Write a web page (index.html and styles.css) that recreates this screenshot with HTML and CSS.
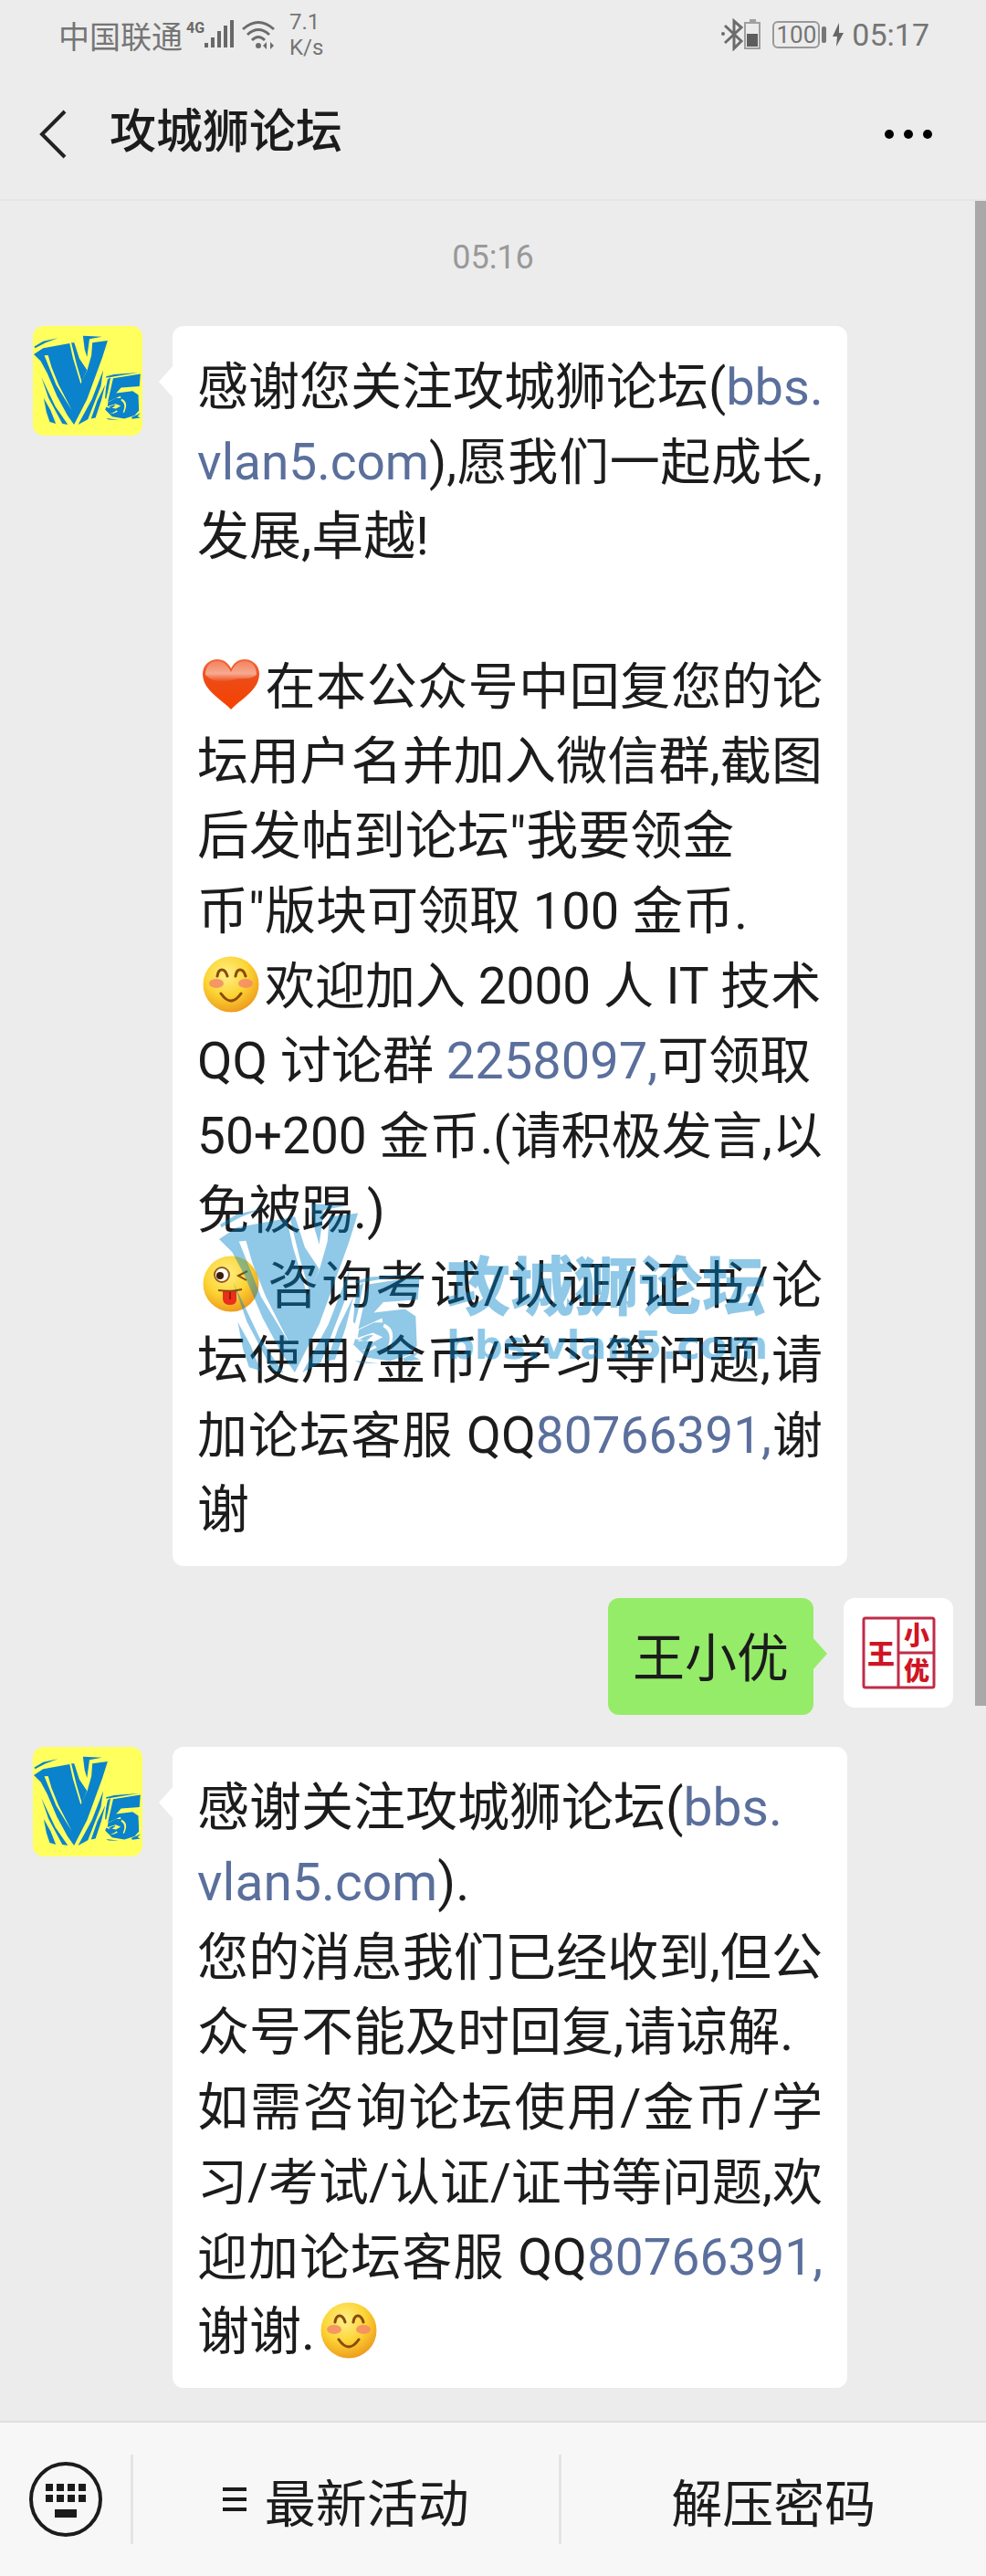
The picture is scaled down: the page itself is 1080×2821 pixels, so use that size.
FILE: index.html
```html
<!DOCTYPE html>
<html lang="zh-CN">
<head>
<meta charset="utf-8">
<meta name="viewport" content="width=device-width, initial-scale=1">
<title>攻城狮论坛</title>
<link rel="stylesheet" href="styles.css">
</head>
<body>
<svg class="defs" width="0" height="0" aria-hidden="true">
  <defs>
    <radialGradient id="face" cx="42%" cy="32%" r="70%">
      <stop offset="0" stop-color="#fff08a"/><stop offset=".55" stop-color="#fcd535"/><stop offset="1" stop-color="#ee9a1c"/>
    </radialGradient>
    <linearGradient id="heartFill" x1="0" y1="0" x2="0" y2="1">
      <stop offset="0" stop-color="#f0683c"/><stop offset=".45" stop-color="#ee4a14"/><stop offset="1" stop-color="#f54200"/>
    </linearGradient>
    <linearGradient id="heartShine" x1="0" y1="0" x2="0" y2="1">
      <stop offset="0" stop-color="#fff" stop-opacity=".2"/><stop offset=".6" stop-color="#fff" stop-opacity=".5"/><stop offset="1" stop-color="#fff" stop-opacity="0"/>
    </linearGradient>
    <symbol id="heart" viewBox="0 0 62 62">
      <path d="M31 58C21 47 0 37 0 19 0 9 8 3 16 3c7 0 12 4 15 10C34 7 39 3 46 3c8 0 16 6 16 16 0 18-21 28-31 39z" fill="url(#heartFill)"/>
      <path d="M3 20C3 10 9 5 16 5c7 0 12 5 15 12 3-7 8-12 15-12 7 0 13 5 13 15-8 7-17 2-28 6-11 3-20 2-28-6z" fill="url(#heartShine)"/>
    </symbol>
    <symbol id="smile" viewBox="0 0 62 62">
      <circle cx="31" cy="31" r="30.500" fill="url(#face)"/>
      <ellipse cx="15" cy="30" rx="8" ry="5" fill="#f58a68" opacity=".85"/>
      <ellipse cx="47" cy="30" rx="8" ry="5" fill="#f58a68" opacity=".85"/>
      <g fill="none" stroke="#8a4a0c" stroke-width="3" stroke-linecap="round">
        <path d="M16 22q1-7 5-7t6 7M36 22q1-7 5-7t6 7M20 41q11 16 22 0"/>
      </g>
    </symbol>
    <symbol id="wink" viewBox="0 0 62 62">
      <circle cx="31" cy="31" r="30.500" fill="url(#face)"/>
      <circle cx="21" cy="21" r="8" fill="#fff" stroke="#9b5a12" stroke-width="2"/>
      <circle cx="19" cy="22" r="4" fill="#3a1c08"/>
      <path d="M49 17l-10 5 9 5" fill="none" stroke="#8a4a0c" stroke-width="2"/>
      <path d="M22 39h15v9q0 6-7 6t-8-6z" fill="#e8301c"/>
      <path d="M30 40v8" stroke="#a81408" stroke-width="2"/>
      <path d="M17 38q14 2 26-1" fill="none" stroke="#8a4a0c" stroke-width="2"/>
    </symbol>
    <symbol id="v5" viewBox="17 24 658 553" preserveAspectRatio="none">
      <path d="M20 95L75 62l90-20-75 28-65 35z"/>
      <path fill-rule="evenodd" d="M17 143l58-38 163-30 20 90 48 160 40-84 26-91 6-80 94-12-32 102-95 260-80 157-40-57-65-120-60-140-40-75zM82 150l23-2 22 75 43 107 82 160-97-158z"/>
      <path d="M248 70l18 0 32 100 47 70-32 75-33-115z"/>
      <path d="M320 28l117 6-77 14-15 112-15-50z"/>
      <path d="M64 285l86 180 77 112-34-5-85-160z"/>
      <path d="M78 413l42 75 33 84-38-12-20-60z"/>
      <path d="M445 240l-15 100-80 205-60 32 85-157z"/>
      <path d="M457 330l-25 100-35 105-27 5 38-110z"/>
      <path d="M462 280l50-14 150-10-130 20-68 12zM456 412l6-65 10-50 18-12-16 84-12 50z"/>
      <path fill-rule="evenodd" d="M506 290l168-26-6 76-113 8-31 34 102-12 35 24 4 96-27 30-63 20-75-12-43-42 6-18 60 10 30-16-32-14-50 16 4-26 50-24 28 0-2-14-78 36zM558 418q46 20 16 84l-8 0q24-52-12-74zM470 476q30-24 52-20l-20 16zM484 504q30 0 42-16l8 8-26 12z"/>
      <path d="M462 538l80 10-64-2zM618 532l58-26-20 20 18 8-50 8z"/>
    </symbol>
  </defs>
</svg>

<div class="app">
  <header class="header">
    <div class="status">
      <div class="status-group">
        <span class="carrier">中国联通</span>
        <svg class="signal" width="54" height="34" viewBox="0 0 54 34" fill="#686868" aria-hidden="true">
          <path d="M1 31h4v-5H1zM8 31h4V20H8zM15 31h4V13h-4zM22 31h4V7h-4zM29 31h4V1h-4z" transform="translate(19 0)"/>
          <text x="0" y="15" class="net">4G</text>
        </svg>
        <svg class="wifi" width="38" height="34" viewBox="0 0 38 34" fill="none" stroke="#6c6c6c" stroke-width="3" aria-hidden="true">
          <path d="M2 11q17-15 34 0M7 17q12-11 24 0M12 23q7-7 14 0"/>
          <circle cx="19" cy="29" r="3" fill="#6c6c6c" stroke="none"/>
          <path d="M28 25l-4 4 4 4zM32 25l4 4-4 4z" fill="#6c6c6c" stroke="none"/>
        </svg>
        <span class="speed">7.1<br>K/s</span>
      </div>
      <div class="status-group">
        <svg width="46" height="36" viewBox="0 0 46 36" fill="none" stroke="#6c6c6c" stroke-width="3" aria-hidden="true">
          <path d="M4 8l18 17-8 8V3l8 7L4 27"/>
          <circle cx="2" cy="17" r="2" fill="#6c6c6c" stroke="none"/>
          <path d="M26 5h16v28H26z" stroke="#a0a0a0" stroke-width="2"/>
          <path d="M31 3h7" stroke="#a0a0a0" stroke-width="4"/>
          <path d="M28 17h12v14H28z" fill="#5e5e5e" stroke="none"/>
        </svg>
        <span class="battery">100</span>
        <svg class="bolt" width="14" height="26" viewBox="0 0 14 26" fill="#666" aria-hidden="true"><path d="M8 0L1 15h5L5 26l8-15H8z"/></svg>
        <span class="clock">05:17</span>
      </div>
    </div>
    <div class="titlebar">
      <button class="icon-button" type="button" aria-label="返回">
        <svg width="32" height="54" viewBox="0 0 32 54" fill="none" stroke="#222" stroke-width="4"><path d="M29 2L4 27l25 25"/></svg>
      </button>
      <h1 class="title">攻城狮论坛</h1>
      <button class="icon-button" type="button" aria-label="更多">
        <svg width="54" height="12" viewBox="0 0 54 12"><circle cx="6" cy="6" r="5"/><circle cx="27" cy="6" r="5"/><circle cx="48" cy="6" r="5"/></svg>
      </button>
    </div>
  </header>

  <main class="chat">
    <div class="scrollbar"></div>
    <time class="time">05:16</time>

    <article class="message">
      <svg class="avatar avatar--forum" viewBox="0 0 120 120" role="img" aria-label="V5"><use href="#v5" x="1" y="10" width="117" height="98"/></svg>
      <div class="bubble">
        <p class="line full">感谢您关注攻城狮论坛(<a href="#">bbs.</a></p>
        <p class="line full tight"><a href="#">vlan5.com</a>),愿我们一起成长,</p>
        <p class="line">发展,卓越!</p>
        <p class="line">&nbsp;</p>
        <p class="line full tight"><svg class="emoji" role="img" aria-label="爱心"><use href="#heart"/></svg>在本公众号中回复您的论</p>
        <p class="line full">坛用户名并加入微信群,截图</p>
        <p class="line">后发帖到论坛"我要领金</p>
        <p class="line mid">币"版块可领取 100 金币.</p>
        <p class="line tight"><svg class="emoji" role="img" aria-label="微笑"><use href="#smile"/></svg>欢迎加入 2000 人 IT 技术</p>
        <p class="line mid">QQ 讨论群 <a href="#">2258097,</a>可领取</p>
        <p class="line full tight">50+200 金币.(请积极发言,以</p>
        <p class="line">免被踢.)</p>
        <p class="line full"><svg class="emoji" role="img" aria-label="吐舌"><use href="#wink"/></svg>咨询考试/认证/证书/论</p>
        <p class="line full">坛使用/金币/学习等问题,请</p>
        <p class="line full tight">加论坛客服 QQ<a href="#">80766391,</a>谢</p>
        <p class="line">谢</p>
        <div class="watermark" aria-hidden="true">
          <svg class="watermark-logo"><use href="#v5"/></svg>
          <div class="watermark-text">
            <span class="watermark-name">攻城狮论坛</span>
            <span class="watermark-url">bbs.vlan5.com</span>
          </div>
        </div>
      </div>
    </article>

    <article class="message message--own">
      <div class="bubble bubble--own"><p class="line">王小优</p></div>
      <svg class="avatar avatar--seal" viewBox="0 0 120 120" role="img" aria-label="王小优">
        <g fill="none" stroke="#c02c48" stroke-width="3"><rect x="22" y="22" width="77" height="76" rx="2"/><path d="M60 22v76M60 60h39"/></g>
        <g class="seal-text"><text x="26" y="72" font-size="30">王</text><text x="66" y="51" font-size="28">小</text><text x="66" y="90" font-size="28">优</text></g>
      </svg>
    </article>

    <article class="message">
      <svg class="avatar avatar--forum" viewBox="0 0 120 120" role="img" aria-label="V5"><use href="#v5" x="1" y="10" width="117" height="98"/></svg>
      <div class="bubble">
        <p class="line">感谢关注攻城狮论坛(<a href="#">bbs.</a></p>
        <p class="line"><a href="#">vlan5.com</a>).</p>
        <p class="line full">您的消息我们已经收到,但公</p>
        <p class="line">众号不能及时回复,请谅解.</p>
        <p class="line full">如需咨询论坛使用/金币/学</p>
        <p class="line full tight">习/考试/认证/证书等问题,欢</p>
        <p class="line full tight">迎加论坛客服 QQ<a href="#">80766391,</a></p>
        <p class="line">谢谢.<svg class="emoji" role="img" aria-label="微笑"><use href="#smile"/></svg></p>
      </div>
    </article>
  </main>

  <footer class="footer">
    <button class="keyboard" type="button" aria-label="键盘">
      <svg width="82" height="86" viewBox="0 0 82 86">
        <ellipse cx="41" cy="43" rx="38" ry="39" fill="none" stroke="#1c1c1c" stroke-width="4"/>
        <path fill="#1c1c1c" d="M19 26h8v8h-8zM31 26h8v8h-8zM43 26h8v8h-8zM55 26h8v8h-8zM19 38h8v8h-8zM31 38h8v8h-8zM43 38h8v8h-8zM55 38h8v8h-8zM29 54h24v9H29z"/>
      </svg>
    </button>
    <button class="menu" type="button">
      <svg width="26" height="26" viewBox="0 0 26 26" stroke="#1c1c1c" stroke-width="4" aria-hidden="true"><path d="M0 2h26M0 13h26M0 24h26"/></svg>
      最新活动
    </button>
    <button class="menu" type="button">解压密码</button>
  </footer>
</div>
</body>
</html>
```
FILE: styles.css
```css
* { box-sizing: border-box; }

body {
  margin: 0;
  background: #ececec;
  color: #1c1c1c;
  font-family: Roboto, "Noto Sans CJK SC", sans-serif;
}

p, h1 { margin: 0; }
a { color: #5b6f9c; text-decoration: none; }
svg { display: block; flex: none; }

button {
  border: 0;
  padding: 0;
  background: none;
  color: inherit;
  font: inherit;
}

.defs { position: absolute; }

.app {
  display: flex;
  flex-direction: column;
  min-height: 100vh;
}

/* status bar and title */
.header { border-bottom: 2px solid #e6e6e6; }

.status {
  display: flex;
  justify-content: space-between;
  height: 76px;
  padding: 0 62px 0 64px;
  color: #757575;
}

.status-group { display: flex; align-items: center; }
.carrier { font-size: 34px; }
.signal { margin-left: 4px; }
.net { font: 700 16px "Roboto", sans-serif; }
.wifi { margin-left: 6px; }

.speed {
  margin-left: 15px;
  font-size: 24px;
  line-height: 28px;
}

.battery {
  position: relative;
  width: 52px;
  margin-left: 10px;
  border: 2px solid #999;
  border-radius: 6px;
  font-size: 26px;
  line-height: 26px;
  text-align: center;
}

.battery::after {
  content: "";
  position: absolute;
  top: 4px;
  right: -9px;
  width: 5px;
  height: 18px;
  border-radius: 2px;
  background: #777;
}

.bolt { margin-left: 13px; }
.clock { margin-left: 8px; font-size: 34px; }

.titlebar {
  display: flex;
  align-items: center;
  height: 142px;
  padding: 0 58px 0 42px;
}

.title {
  flex: 1;
  margin-left: 46px;
  padding-bottom: 4px;
  font-size: 51px;
  font-weight: 500;
  line-height: 60px;
}

/* conversation */
.chat {
  position: relative;
  flex: 1;
  display: flex;
  flex-direction: column;
  gap: 35px;
  padding: 38px 36px 36px;
}

.scrollbar {
  position: absolute;
  top: 0;
  right: 0;
  width: 12px;
  height: 1648px;
  background: #a9a9a9;
}

.time {
  margin-bottom: 16px;
  color: #999;
  font-size: 36px;
  line-height: 48px;
  text-align: center;
}

.message { display: flex; align-items: flex-start; gap: 33px; }
.message--own { justify-content: flex-end; }

.avatar { width: 120px; height: 120px; border-radius: 12px; }
.avatar--forum { background: #ffff5e; fill: #0a82cc; }
.avatar--seal { background: #fff; }
.seal-text { fill: #d01424; font-family: "Noto Sans CJK SC", sans-serif; font-weight: 900; }

.bubble {
  position: relative;
  width: 739px;
  padding: 26px 27px 20px;
  border-radius: 12px;
  background: #fff;
  font-size: 57px;
  line-height: 82px;
}

.bubble::before {
  content: "";
  position: absolute;
  top: 43px;
  left: -15px;
  width: 16px;
  height: 36px;
  background: inherit;
  clip-path: polygon(100% 0, 0 50%, 100% 100%);
}

.bubble--own { width: auto; background: #95ec69; }

.bubble--own::before {
  right: -15px;
  left: auto;
  clip-path: polygon(0 0, 100% 50%, 0 100%);
}

.line { height: 82px; white-space: nowrap; }
.full { font-size: 56px; text-align: justify; text-align-last: justify; }
.mid { font-size: 56px; }
.tight { font-size: 55px; }

.emoji {
  display: inline-block;
  width: 62px;
  height: 62px;
  margin: 0 6px;
  vertical-align: -10px;
}

.watermark {
  position: absolute;
  top: 960px;
  left: 51px;
  display: flex;
  gap: 29px;
  opacity: .43;
  color: #0082c8;
  fill: #0082c8;
}

.watermark-logo { width: 220px; height: 186px; }
.watermark-text { display: flex; flex-direction: column; padding-top: 56px; }
.watermark-name { font-size: 70px; font-weight: 900; line-height: 76px; }
.watermark-url { font: 700 43px/48px "DejaVu Sans", sans-serif; }

/* bottom menu */
.footer {
  display: flex;
  align-items: center;
  height: 170px;
  border-top: 2px solid #dedede;
  background: #f7f7f7;
}

.keyboard { width: 143px; padding-left: 31px; }

.menu {
  flex: 1;
  display: flex;
  align-items: center;
  justify-content: center;
  gap: 20px;
  height: 98px;
  border-left: 3px solid #e4e4e4;
  font-size: 56px;
}
```
